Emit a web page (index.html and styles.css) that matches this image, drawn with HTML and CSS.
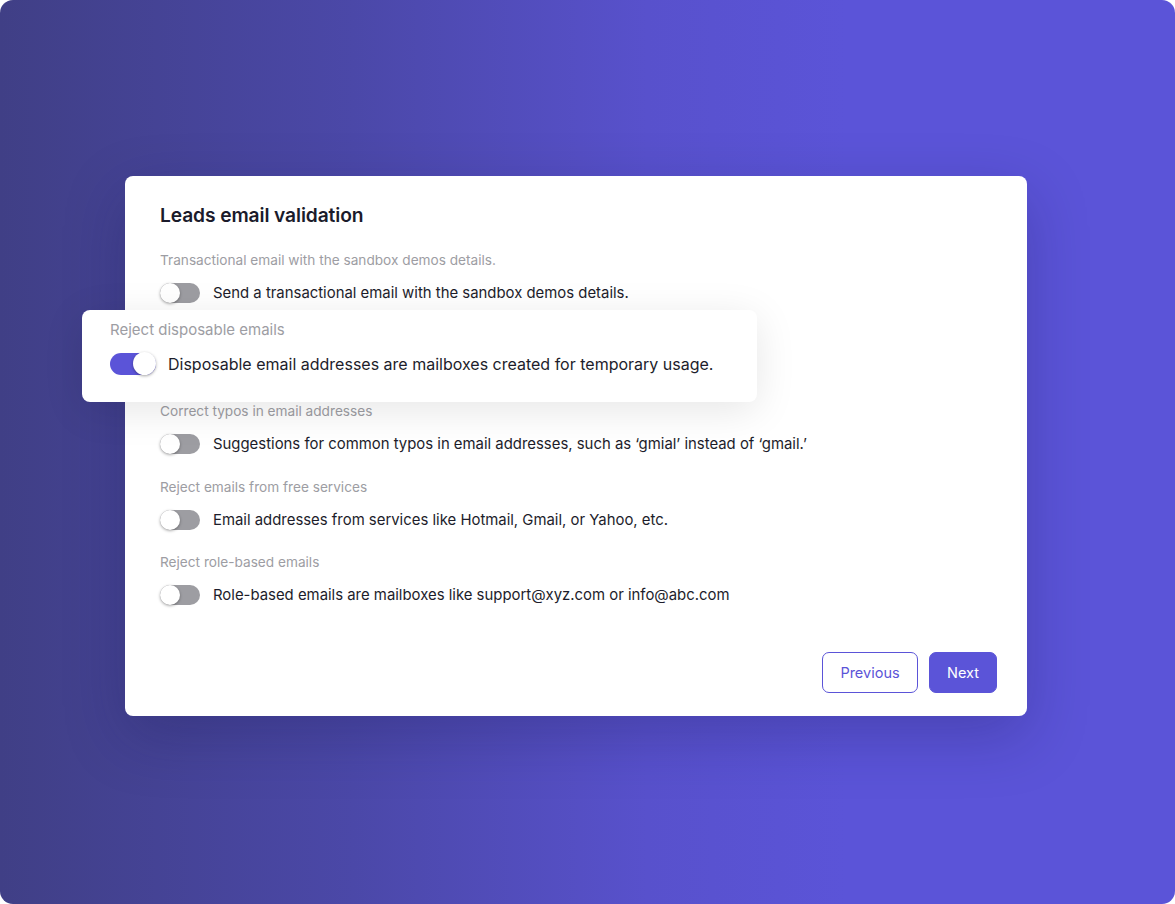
FILE: index.html
```html
<!DOCTYPE html>
<html lang="en">
<head>
<meta charset="utf-8">
<title>Leads email validation</title>
<link rel="stylesheet" href="styles.css">
</head>
<body>
<div class="page">
  <div class="card">
    <h1 class="title">Leads email validation</h1>
    <div class="rows">
      <div class="row">
        <div class="label">Transactional email with the sandbox demos details.</div>
        <div class="control"><span class="toggle"><span class="knob"></span></span><span class="text">Send a transactional email with the sandbox demos details.</span></div>
      </div>
      <div class="row row-focus">
        <div class="popout">
          <div class="label">Reject disposable emails</div>
          <div class="control"><span class="toggle on"><span class="knob"></span></span><span class="text">Disposable email addresses are mailboxes created for temporary usage.</span></div>
        </div>
      </div>
      <div class="row">
        <div class="label">Correct typos in email addresses</div>
        <div class="control"><span class="toggle"><span class="knob"></span></span><span class="text">Suggestions for common typos in email addresses, such as ‘gmial’ instead of ‘gmail.’</span></div>
      </div>
      <div class="row">
        <div class="label">Reject emails from free services</div>
        <div class="control"><span class="toggle"><span class="knob"></span></span><span class="text">Email addresses from services like Hotmail, Gmail, or Yahoo, etc.</span></div>
      </div>
      <div class="row">
        <div class="label">Reject role-based emails</div>
        <div class="control"><span class="toggle"><span class="knob"></span></span><span class="text">Role-based emails are mailboxes like support@xyz.com or info@abc.com</span></div>
      </div>
    </div>
    <div class="actions">
      <button class="btn btn-outline">Previous</button>
      <button class="btn btn-primary">Next</button>
    </div>
  </div>
</div>
</body>
</html>
```
FILE: styles.css
```css
* { box-sizing: border-box; }
html, body { margin: 0; padding: 0; background: #ffffff; }
body { font-family: Inter, "Noto Sans", sans-serif; }

.page {
  width: 1175px;
  height: 904px;
  border-radius: 13px;
  overflow: hidden;
  background: linear-gradient(90deg, #403f86 0%, #4b48a8 30%, #5851cc 55%, #5b54d8 72%, #5b54d8 100%);
  padding: 176px 0 0 125px;
}

.card {
  width: 902px;
  background: #ffffff;
  border-radius: 8px;
  padding: 27px 30px 23px 35px;
  box-shadow: 0 20px 60px rgba(20, 18, 70, 0.25);
}

.title {
  margin: 0;
  font-size: 19.2px;
  line-height: 24px;
  font-weight: 600;
  color: #1b1b2b;
  letter-spacing: -0.1px;
}

.rows {
  display: flex;
  flex-direction: column;
  gap: 22.5px;
  margin-top: 24px;
}

.row {
  display: flex;
  flex-direction: column;
  gap: 13px;
  height: 53px;
}

.label {
  font-size: 13.65px;
  line-height: 18px;
  color: #9d9da3;
}

.control {
  display: flex;
  align-items: center;
  gap: 13px;
  height: 22px;
}

.text {
  font-size: 14.9px;
  color: #1d1d2b;
  white-space: nowrap;
}

.toggle {
  position: relative;
  width: 40px;
  height: 20px;
  border-radius: 10px;
  background: #9d9da2;
  flex: none;
}

.knob {
  position: absolute;
  top: 0;
  left: 0;
  width: 20px;
  height: 20px;
  border-radius: 50%;
  background: #ffffff;
  box-shadow: 0 1px 3px rgba(0, 0, 0, 0.35);
}

.row-focus { position: relative; }

.popout {
  position: absolute;
  left: -78px;
  top: -17px;
  width: 675px;
  height: 92px;
  background: #ffffff;
  border-radius: 8px;
  padding: 10px 28px 0 28px;
  box-shadow: 0 8px 40px rgba(0, 0, 0, 0.10);
  display: flex;
  flex-direction: column;
  gap: 12px;
  z-index: 2;
}

.popout .label {
  font-size: 15px;
  line-height: 20px;
}

.popout .control {
  height: 24px;
  gap: 12px;
}

.popout .text { font-size: 16px; }

.popout .toggle {
  width: 46px;
  height: 22px;
  border-radius: 11px;
}

.popout .knob {
  width: 23px;
  height: 23px;
  top: -0.5px;
}

.toggle.on { background: #5b54d8; }
.toggle.on .knob { left: auto; right: 0; }

.actions {
  display: flex;
  justify-content: flex-end;
  gap: 11px;
  margin-top: 46px;
}

.btn {
  font-family: Inter, "Noto Sans", sans-serif;
  font-size: 14.5px;
  height: 41px;
  border-radius: 7px;
  cursor: pointer;
}

.btn-outline {
  width: 96px;
  background: #ffffff;
  border: 1px solid #5b54d8;
  color: #5b54d8;
}

.btn-primary {
  width: 68px;
  background: #5b54d8;
  border: 1px solid #5b54d8;
  color: #ffffff;
}
```
